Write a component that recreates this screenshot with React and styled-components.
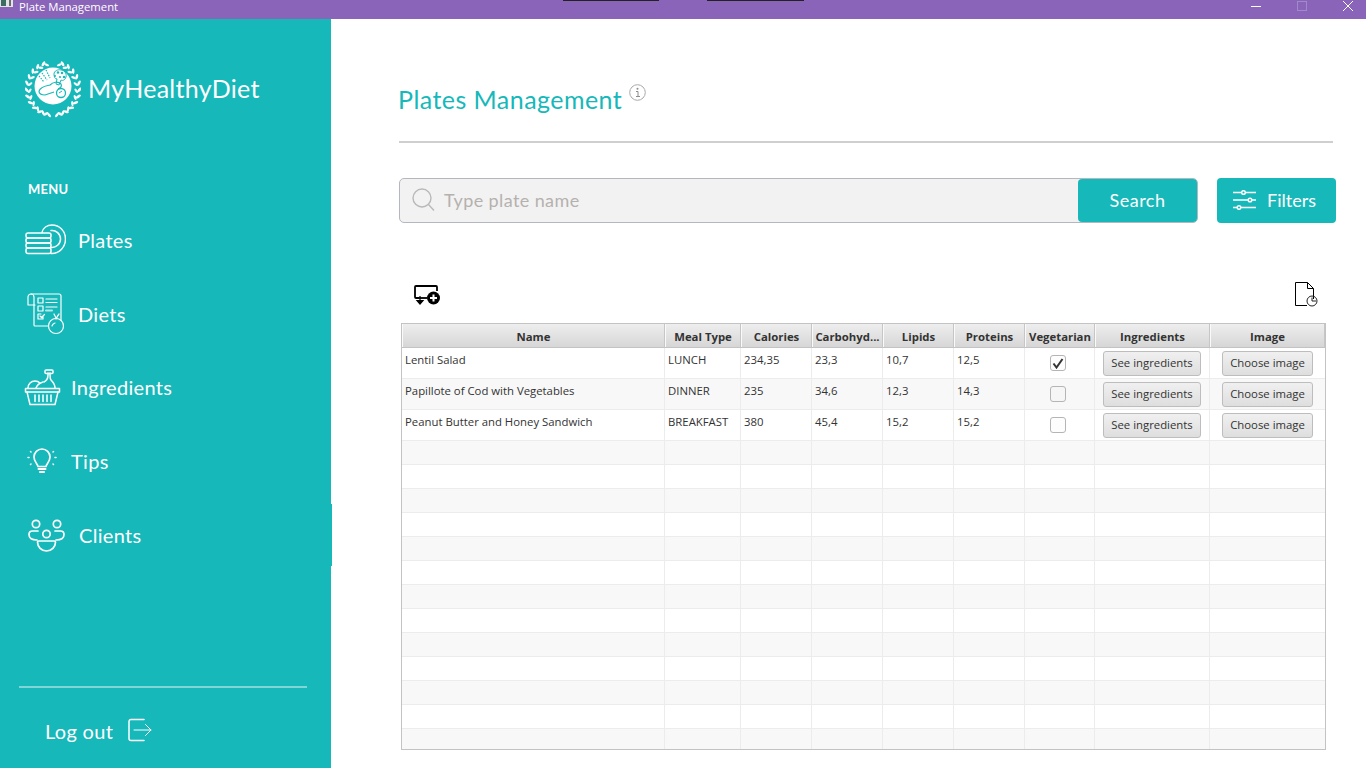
import styled, { createGlobalStyle } from "styled-components"

const GlobalStyle = createGlobalStyle`
  html, body { margin: 0; padding: 0; background: #fff; overflow: hidden; }
  * { box-sizing: border-box; }
`

const TEAL = "#16b8ba"
const UI_FONT = `Lato, "Open Sans", sans-serif`
const TABLE_FONT = `"Open Sans", "Noto Sans", sans-serif`

const Window = styled.div`
  width: 1366px;
  height: 768px;
  display: flex;
  flex-direction: column;
  overflow: hidden;
`
const TitleBar = styled.div`
  position: relative;
  height: 19px;
  flex: none;
  background: #8964b8;
  color: #fff;
  display: flex;
  align-items: flex-start;
  font: 11.3px ${TABLE_FONT};
`
const AppGlyph = styled.svg`
  width: 13px;
  height: 12px;
  margin-right: 6px;
  flex: none;
`
const TitleText = styled.span`
  flex: 1;
  line-height: 13px;
`
const ScreenMark = styled.i`
  position: absolute;
  top: 0;
  left: ${(p) => p.$left}px;
  width: ${(p) => p.$width}px;
  height: 1px;
  background: #222;
`
const WinControls = styled.div`
  display: flex;
  padding-right: 7px;
  gap: 24px;
`
const WinIcon = styled.svg`
  width: 22px;
  height: 12px;
`
const Body = styled.div`
  flex: 1;
  display: flex;
  min-height: 0;
`
const Sidebar = styled.aside`
  width: 331px;
  flex: none;
  background: ${TEAL};
  color: #fff;
  font-family: ${UI_FONT};
  display: flex;
  flex-direction: column;
`
const Brand = styled.div`
  display: flex;
  align-items: center;
  height: 58px;
  margin: 41px 0 0 25px;
`
const BrandName = styled.span`
  margin-left: 7px;
  margin-top: -3px;
  font-size: 25px;
  letter-spacing: 0.3px;
`
const MenuLabel = styled.div`
  margin: 63px 0 0 28px;
  font-size: 13px;
  line-height: 16px;
  font-weight: 700;
  letter-spacing: 0.2px;
`
const Nav = styled.nav`
  margin-top: 6px;
  display: flex;
  flex-direction: column;
`
const NavItem = styled.div`
  height: 73.8px;
  display: flex;
  align-items: center;
  padding-left: ${(p) => p.$pad}px;
  font-size: 20px;
  letter-spacing: 0.3px;
  position: relative;
  ${(p) => p.$wide && `
    &::after {
      content: "";
      position: absolute;
      right: -1px;
      top: 6px;
      bottom: 6px;
      width: 1px;
      background: ${TEAL};
    }
  `}
`
const NavIconBox = styled.span`
  width: ${(p) => p.$w}px;
  display: flex;
  flex: none;
`
const SideFoot = styled.div`
  margin: auto 24px 0 19px;
  border-top: 2px solid #7fd6d8;
  height: 82px;
  display: flex;
  align-items: center;
  padding: 6px 0 0 26px;
  font-size: 20px;
  letter-spacing: 0.3px;
`
const LogoutIcon = styled.svg`
  margin-left: 15px;
  margin-top: -2px;
  width: 24px;
  height: 24px;
`
const Main = styled.main`
  flex: 1;
  min-width: 0;
  padding: 0 30px 0 68px;
  display: flex;
  flex-direction: column;
`
const Heading = styled.div`
  display: flex;
  height: 124px;
  padding-top: 65px;
  border-bottom: 2px solid #cfcfcf;
  margin-right: 3px;
  margin-bottom: 35px;
  color: ${TEAL};
  font-family: ${UI_FONT};
`
const HeadingText = styled.h1`
  margin: 0 0 0 -1px;
  font-size: 25px;
  line-height: 30px;
  font-weight: 400;
  letter-spacing: 0.45px;
`
const InfoIcon = styled.svg`
  width: 17px;
  height: 17px;
  margin-left: 7px;
`
const SearchRow = styled.div`
  display: flex;
  height: 45px;
  gap: 19px;
  font-family: ${UI_FONT};
`
const SearchBox = styled.div`
  width: 799px;
  display: flex;
  background: #f2f2f2;
  border: 1px solid #b4b7bf;
  border-radius: 5px;
  overflow: hidden;
`
const SearchField = styled.div`
  flex: 1;
  display: flex;
  align-items: center;
  padding: 0 0 2px 12px;
  color: #b5b1ae;
  font-size: 18px;
  letter-spacing: 0.4px;
  gap: 9px;
`
const TealButton = styled.div`
  width: ${(p) => p.$w}px;
  background: ${TEAL};
  color: #fff;
  font-size: 18px;
  letter-spacing: ${(p) => (p.$rounded ? "0" : "0.5px")};
  border-radius: ${(p) => (p.$rounded ? "4px" : "4px 0 0 4px")};
  padding: 0 ${(p) => (p.$rounded ? "4px" : "0")} 1px 0;
  display: flex;
  align-items: center;
  justify-content: center;
  gap: 11px;
`
const Toolbar = styled.div`
  display: flex;
  justify-content: space-between;
  align-items: flex-start;
  height: 100px;
  padding: 59px 18px 0 15px;
`
const AddPlateIcon = styled.svg`
  width: 26px;
  height: 20px;
  margin-top: 3px;
`
const ReportIcon = styled.svg`
  width: 23px;
  height: 25px;
`
const TableFrame = styled.div`
  margin-left: 2px;
  width: 925px;
  height: 427px;
  border: 1px solid #c3c3c3;
  overflow: hidden;
  font: 11.35px ${TABLE_FONT};
  color: #333;
`
const HeaderRow = styled.div`
  display: grid;
  grid-template-columns: ${(p) => p.$cols};
  height: 24px;
  border-bottom: 1px solid #c3c3c3;
`
const HeaderCell = styled.div`
  background: linear-gradient(#eeeeee, #d6d6d6);
  border-left: 1px solid #fafafa;
  border-right: 1px solid #c6c6c6;
  font-weight: 700;
  text-align: center;
  line-height: 25px;
  white-space: nowrap;
  overflow: hidden;
`
const Row = styled.div`
  display: grid;
  grid-template-columns: ${(p) => p.$cols};
  height: ${(p) => p.$h}px;
  background: ${(p) => (p.$odd ? "#f8f8f8" : "#fff")};
  border-bottom: 1px solid #ececec;
`
const Cell = styled.div`
  border-right: 1px solid #ececec;
  padding: 4px 3px 0;
  line-height: 16px;
  white-space: nowrap;
  overflow: hidden;
  &:last-child { border-right: 0; }
`
const CenterCell = styled(Cell)`
  display: flex;
  align-items: center;
  justify-content: center;
  padding: 0 ${(p) => p.$shift || 0}px 0 0;
`
const RowButton = styled.div`
  height: 25px;
  padding: 0 7.500px;
  display: flex;
  align-items: center;
  border: 1px solid #bdbdbd;
  border-radius: 3px;
  background: linear-gradient(#f0f0f0, #dedede);
  color: #333;
`
const CheckBox = styled.div`
  width: 16px;
  height: 16px;
  border: 1px solid #b5b5b5;
  border-radius: 3px;
  background: ${(p) => (p.$odd ? "#f6f6f6" : "#fdfdfd")};
  display: flex;
  align-items: center;
  justify-content: center;
`

const COLS = "263px 76px 71px 71px 71px 71px 70px 115px 1fr"
const COLUMNS = ["Name", "Meal Type", "Calories", "Carbohyd...", "Lipids", "Proteins", "Vegetarian", "Ingredients", "Image"]
const PLATES = [
  { name: "Lentil Salad", meal: "LUNCH", cal: "234,35", carbs: "23,3", lipids: "10,7", proteins: "12,5", veg: true },
  { name: "Papillote of Cod with Vegetables", meal: "DINNER", cal: "235", carbs: "34,6", lipids: "12,3", proteins: "14,3", veg: false },
  { name: "Peanut Butter and Honey Sandwich", meal: "BREAKFAST", cal: "380", carbs: "45,4", lipids: "15,2", proteins: "15,2", veg: false },
]
const EMPTY_ROWS = Array.from({ length: 13 }, (_, i) => i)

const stroke = { fill: "none", stroke: "#fff", strokeWidth: 1.5, strokeLinecap: "round", strokeLinejoin: "round" }

const Logo = () => {
  const leaves = []
  for (let a = 18; a <= 168; a += 15) {
    for (const side of [-1, 1]) {
      const rad = (a * Math.PI) / 180
      const x = 28 + side * 24.5 * Math.sin(rad)
      const y = 28.5 - 26 * Math.cos(rad)
      leaves.push(
        <ellipse key={`${a}${side}o`} cx={x + side * 2} cy={y} rx="2.8" ry="1.3" fill="#fff"
          transform={`rotate(${side * (a - 140)} ${x + side * 2} ${y})`} />,
        <ellipse key={`${a}${side}i`} cx={x - side * 1.2} cy={y + 1} rx="2.6" ry="1.2" fill="#fff"
          transform={`rotate(${side * (a - 40)} ${x - side * 1.2} ${y + 1})`} />
      )
    }
  }
  return (
    <svg width="56" height="58" viewBox="0 0 56 58">
      {leaves}
      <circle cx="28" cy="26" r="18.500" fill="#fff" />
      <g fill={TEAL}>
        <circle cx="33" cy="12.500" r="1.200" />
        <circle cx="37" cy="13" r="1.200" />
        <circle cx="39" cy="17" r="1.200" />
        <circle cx="35" cy="17" r="1" />
        <circle cx="30" cy="16" r="1" />
      </g>
      <g fill="none" stroke={TEAL} strokeWidth="1">
        <path d="M29 14c0-3 4-5 7-4 3 0 6 3 5 7-1 3-3 4-5 3l-2 5-3-1 1-5c-2 0-3-2-3-5z" />
        <path d="M17 13l5 7M14 16l5 6M21 10l4 8" strokeDasharray="1.500 1.200" strokeWidth="1.200" />
        <path d="M14 31c2-5 7-5 11-6 3-3 8-4 11-1 1 2 0 4-3 5" strokeWidth="1.200" />
        <path d="M14 31c0 3 3 4 6 4 3-1 6-2 9-3" strokeWidth="1.200" />
        <circle cx="36" cy="33" r="4.500" strokeWidth="1.300" />
        <path d="M34 33l3-2" />
      </g>
    </svg>
  )
}

const PlatesIcon = () => (
  <svg width="41" height="31" viewBox="0 0 41 31" {...stroke}>
    <path d="M17 8.500C18 4 22 1 27 1c7.500 0 13.500 6 13.500 14S34.500 29.500 27 29.500H26" />
    <path d="M26 6.500c5-.7 9.500 3.500 9.500 8.500S31 24 26 23.500" />
    <rect x="1" y="9" width="25" height="5" rx="2" />
    <rect x="1" y="14" width="25" height="5" rx="2" />
    <rect x="1" y="19" width="25" height="5" rx="2" />
    <rect x="1" y="24" width="25" height="5.500" rx="2" />
  </svg>
)

const DietsIcon = () => (
  <svg width="38" height="42" viewBox="0 0 38 42" {...stroke} strokeWidth="1.200">
    <path d="M8 12H1V4a3 3 0 0 1 6 0v28a1 1 0 0 0 1 1h13" />
    <path d="M4 1h28a2 2 0 0 1 2 2v24" />
    <rect x="11" y="5" width="5" height="5" />
    <rect x="11" y="13" width="5" height="5" />
    <path d="M19 6h11M19 9.500h11M19 14h11" />
    <path d="M19 17.500h6" strokeWidth="2" stroke="#b5e8e9" />
    <path d="M16 23v3h-5v-5h3M13 23l1.500 1.500 3-3" />
    <circle cx="29" cy="33" r="7.500" />
    <path d="M29 26c0-2-1-3-2-5M29 26c1-2 2-4 3-5M25 33a4 4 0 0 1 3-3" />
  </svg>
)

const BasketIcon = () => (
  <svg width="37" height="37" viewBox="0 0 37 37" {...stroke}>
    <path d="M1.500 19.500h34v3.500h-34z" />
    <path d="M3 23l3 12.500h25L34 23" />
    <path d="M11 26v6.500M15 26v6.500M19 26v6.500M23 26v6.500M27 26v6.500" />
    <path d="M4 19c0-4 3-7 7-7 2 0 4 1 5 2" />
    <path d="M12 19c1-3 4-5 7-6" />
    <path d="M20 13c2-1 4-3 4-7V4M31 19c0-3-1-5-4-8-1-1-1-3-1-5V4" />
    <rect x="21" y="1" width="8" height="3.500" rx="1" />
  </svg>
)

const BulbIcon = () => (
  <svg width="30" height="26" viewBox="0 0 30 26" {...stroke}>
    <path d="M11 18.500c-.5-3-4-4.500-4-9.500a8 8 0 0 1 16 0c0 5-3.500 6.500-4 9.500z" strokeWidth="1.700" />
    <path d="M11.500 21h7M13 24h4" strokeWidth="2" />
    <path d="M1 9.500h1M28 9.500h1M3.500 3.500l.5.500M26.500 3.500l-.5.500M3.500 16.500l.5-.5M26.500 16.500l-.5-.5" />
  </svg>
)

const ClientsIcon = () => (
  <svg width="38" height="33" viewBox="0 0 38 33" {...stroke} strokeWidth="1.700">
    <circle cx="8" cy="5" r="3.700" />
    <circle cx="29" cy="5" r="3.700" />
    <circle cx="18.500" cy="15" r="3.700" />
    <path d="M10 12H4.500C2.500 12 1 13.500 1 15.500c0 3.500 3 5.500 8 5.500" />
    <path d="M27 12h5.500c2 0 3.500 1.500 3.500 3.500 0 3.500-3 5.500-8 5.500" />
    <path d="M10.500 22h16c.5 0 1 .5 1 1 0 5-4 9-9 9s-9-4-9-9c0-.5.5-1 1-1z" />
  </svg>
)

const FiltersIcon = () => (
  <svg width="23" height="20" viewBox="0 0 23 20" {...stroke} strokeWidth="1.500">
    <path d="M0 2.500h8M13 2.500h10M0 10h15M19 10h4M0 17.500h4M8 17.500h15" />
    <circle cx="10.500" cy="2.500" r="1.800" />
    <circle cx="17" cy="10" r="1.800" />
    <circle cx="6" cy="17.500" r="1.800" />
  </svg>
)

const App = () => {
  return (
    <>
      <GlobalStyle />
      <Window>
        <TitleBar>
          <AppGlyph viewBox="0 0 13 12">
            <rect width="13" height="7" fill="#dfe6e4" />
            <rect x="1" width="5" height="6" fill="#3d6d60" />
            <rect x="9" width="2" height="6" fill="#6b6b6b" />
          </AppGlyph>
          <TitleText>Plate Management</TitleText>
          <ScreenMark $left={563} $width={96} />
          <ScreenMark $left={707} $width={97} />
          <WinControls>
            <WinIcon viewBox="0 0 22 12"><path d="M6 6.500h10" stroke="#fff" /></WinIcon>
            <WinIcon viewBox="0 0 22 12"><rect x="6.500" y="1.500" width="9" height="9" fill="none" stroke="#a18ac9" /></WinIcon>
            <WinIcon viewBox="0 0 22 12"><path d="M6 1l10 10M16 1L6 11" stroke="#fff" /></WinIcon>
          </WinControls>
        </TitleBar>
        <Body>
          <Sidebar>
            <Brand>
              <Logo />
              <BrandName>MyHealthyDiet</BrandName>
            </Brand>
            <MenuLabel>MENU</MenuLabel>
            <Nav>
              <NavItem $pad={25}><NavIconBox $w={53}><PlatesIcon /></NavIconBox>Plates</NavItem>
              <NavItem $pad={27}><NavIconBox $w={51}><DietsIcon /></NavIconBox>Diets</NavItem>
              <NavItem $pad={24}><NavIconBox $w={47}><BasketIcon /></NavIconBox>Ingredients</NavItem>
              <NavItem $pad={27}><NavIconBox $w={44}><BulbIcon /></NavIconBox>Tips</NavItem>
              <NavItem $pad={28} $wide><NavIconBox $w={51}><ClientsIcon /></NavIconBox>Clients</NavItem>
            </Nav>
            <SideFoot>
              Log out
              <LogoutIcon viewBox="0 0 24 24" {...stroke}>
                <path d="M16 1.500H3a2 2 0 0 0-2 2v17a2 2 0 0 0 2 2h13" />
                <path d="M6 12h17M17.500 6.500L23 12l-5.500 5.500" strokeWidth="1" />
              </LogoutIcon>
            </SideFoot>
          </Sidebar>
          <Main>
            <Heading>
              <HeadingText>Plates Management</HeadingText>
              <InfoIcon viewBox="0 0 17 17">
                <circle cx="8.500" cy="8.500" r="7.800" fill="none" stroke="#a8a8a8" />
                <path d="M7 7.500h2v5M7 12.500h4" fill="none" stroke="#8c8c8c" />
                <circle cx="8.500" cy="4.800" r="1" fill="#8c8c8c" />
              </InfoIcon>
            </Heading>
            <SearchRow>
              <SearchBox>
                <SearchField>
                  <svg width="23" height="24" viewBox="0 0 23 24" fill="none" stroke="#b9b9b9" strokeWidth="1.400">
                    <circle cx="10" cy="10" r="9" />
                    <path d="M16.500 16.500l5.500 6" />
                  </svg>
                  Type plate name
                </SearchField>
                <TealButton $w={119}>Search</TealButton>
              </SearchBox>
              <TealButton $w={119} $rounded><FiltersIcon />Filters</TealButton>
            </SearchRow>
            <Toolbar>
              <AddPlateIcon viewBox="0 0 26 20">
                <path d="M5 13H2a1 1 0 0 1-1-1V2a1 1 0 0 1 1-1h20a1 1 0 0 1 1 1v4" fill="none" stroke="#000" strokeWidth="1.800" />
                <path d="M6 11v7M3 15.500L6 19l3-3.500z" stroke="#000" strokeWidth="1.200" />
                <path d="M2 13h11" stroke="#000" strokeWidth="1.800" />
                <circle cx="19.500" cy="13" r="6.500" fill="#000" />
                <path d="M19.500 9.500v7M16 13h7" stroke="#fff" strokeWidth="2" />
              </AddPlateIcon>
              <ReportIcon viewBox="0 0 23 25" fill="none" stroke="#000">
                <path d="M12 23.500H.5V.5h12l6 6V17M12.500 .5v6h6" />
                <circle cx="17" cy="19" r="5" stroke="#222" />
                <path d="M17 15.500V19h4" stroke="#222" />
              </ReportIcon>
            </Toolbar>
            <TableFrame>
              <HeaderRow $cols={COLS}>
                {COLUMNS.map((c) => <HeaderCell key={c}>{c}</HeaderCell>)}
              </HeaderRow>
              {PLATES.map((p, i) => (
                <Row key={p.name} $cols={COLS} $h={31} $odd={i % 2 === 1}>
                  <Cell>{p.name}</Cell>
                  <Cell>{p.meal}</Cell>
                  <Cell>{p.cal}</Cell>
                  <Cell>{p.carbs}</Cell>
                  <Cell>{p.lipids}</Cell>
                  <Cell>{p.proteins}</Cell>
                  <CenterCell $shift={3}>
                    <CheckBox $odd={i % 2 === 1}>
                      {p.veg && (
                        <svg width="12" height="11" viewBox="0 0 12 11">
                          <path d="M1.500 5.500L4.500 9.500 10.500 1" fill="none" stroke="#333" strokeWidth="2" />
                        </svg>
                      )}
                    </CheckBox>
                  </CenterCell>
                  <CenterCell><RowButton>See ingredients</RowButton></CenterCell>
                  <CenterCell><RowButton>Choose image</RowButton></CenterCell>
                </Row>
              ))}
              {EMPTY_ROWS.map((n) => (
                <Row key={n} $cols={COLS} $h={24} $odd={n % 2 === 0}>
                  {COLUMNS.map((c) => <Cell key={c} />)}
                </Row>
              ))}
            </TableFrame>
          </Main>
        </Body>
      </Window>
    </>
  )
}

export default App
